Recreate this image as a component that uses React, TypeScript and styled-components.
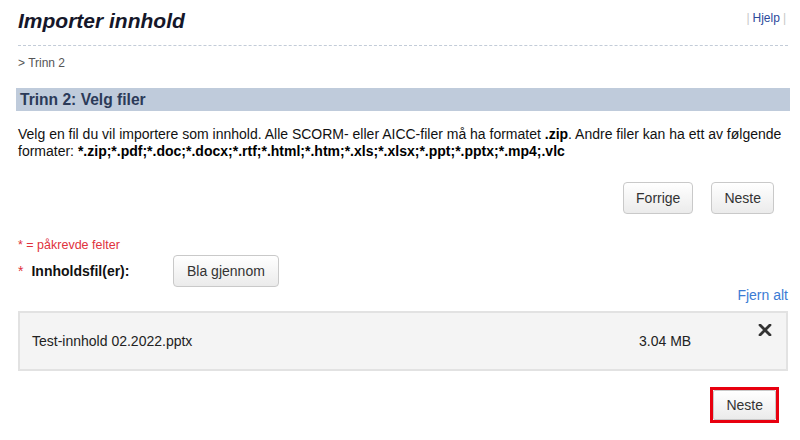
import styled, { createGlobalStyle } from 'styled-components';

const GlobalStyle = createGlobalStyle`
  html, body {
    margin: 0;
    padding: 0;
    background: #ffffff;
  }
  body {
    font-family: 'Liberation Sans', Arial, sans-serif;
    color: #1a1a1a;
  }
`;

const Page = styled.div`
  width: 800px;
  height: 440px;
  box-sizing: border-box;
  padding: 0 12px 0 18px;
  overflow: hidden;
`;

const Header = styled.div`
  display: flex;
  justify-content: space-between;
  align-items: flex-start;
  height: 45px;
  border-bottom: 1px dashed #c3ccd8;
`;

const Title = styled.h1`
  margin: 9px 0 0;
  font-size: 21px;
  font-weight: bold;
  font-style: italic;
  color: #15172a;
`;

const HelpLinks = styled.div`
  margin-top: 11px;
  margin-right: 2px;
  font-size: 12px;
  color: #c8c8c8;
  a {
    color: #2c4a9c;
    text-decoration: none;
    margin: 0 3px;
  }
`;

const Breadcrumb = styled.div`
  margin-top: 10px;
  font-size: 12px;
  color: #555;
`;

const SectionBar = styled.div`
  margin: 18px -2px 0;
  height: 23px;
  display: flex;
  align-items: center;
  padding-left: 4px;
  background: #bfcbdb;
  font-size: 15.6px;
  font-weight: bold;
  color: #2b3a58;
`;

const Description = styled.p`
  margin: 15px 0 0;
  font-size: 14px;
  line-height: 17px;
  color: #111;
  b {
    color: #000;
  }
`;

const ButtonRow = styled.div`
  display: flex;
  justify-content: flex-end;
  gap: 18px;
  margin-top: 22px;
  padding-right: 14px;
`;

const Button = styled.button`
  height: 32px;
  padding: 0 12px;
  font-family: 'Liberation Sans', Arial, sans-serif;
  font-size: 14px;
  color: #333;
  background: linear-gradient(#ffffff, #ebebeb);
  border: 1px solid #c9c9c9;
  border-radius: 4px;
  cursor: pointer;
`;

const BrowseButton = styled(Button)`
  padding: 0 13px;
`;

const Highlight = styled.span`
  display: inline-flex;
  border: 3px solid #e8000f;
  ${Button} {
    height: 30px;
    border-radius: 2px;
  }
`;

const RequiredNote = styled.div`
  margin-top: 24px;
  font-size: 12.5px;
  color: #e0313c;
`;

const FieldRow = styled.div`
  display: flex;
  align-items: center;
  margin-top: 3px;
`;

const FieldLabel = styled.label`
  width: 155px;
  font-size: 14px;
  font-weight: bold;
  color: #111;
  span {
    color: #e0313c;
    font-weight: normal;
    margin-right: 8px;
  }
`;

const RemoveAll = styled.div`
  display: flex;
  justify-content: flex-end;
  font-size: 14px;
  color: #3b7bd4;
`;

const FileBox = styled.div`
  position: relative;
  margin-top: 8px;
  height: 56px;
  display: flex;
  align-items: center;
  padding: 0 12px;
  background: #f4f4f4;
  border: 2px solid #e2e2e2;
  font-size: 14px;
  color: #222;
`;

const FileName = styled.div`
  flex: 1;
`;

const FileSize = styled.div`
  width: 135px;
`;

const RemoveIcon = styled.button`
  position: absolute;
  top: 11px;
  right: 14px;
  border: none;
  background: none;
  padding: 0;
  display: flex;
`;

const FooterRow = styled.div`
  display: flex;
  justify-content: flex-end;
  margin-top: 16px;
  padding-right: 9px;
`;

export default function App() {
  return (
    <>
      <GlobalStyle />
      <Page>
        <Header>
          <Title>Importer innhold</Title>
          <HelpLinks>
            |<a href="#">Hjelp</a>|
          </HelpLinks>
        </Header>
        <Breadcrumb>&gt; Trinn 2</Breadcrumb>
        <SectionBar>Trinn 2: Velg filer</SectionBar>
        <Description>
          Velg en fil du vil importere som innhold. Alle SCORM- eller AICC-filer må ha formatet <b>.zip</b>. Andre filer
          kan ha ett av følgende
          <br />
          formater: <b>*.zip;*.pdf;*.doc;*.docx;*.rtf;*.html;*.htm;*.xls;*.xlsx;*.ppt;*.pptx;*.mp4;.vlc</b>
        </Description>
        <ButtonRow>
          <Button>Forrige</Button>
          <Button>Neste</Button>
        </ButtonRow>
        <RequiredNote>* = påkrevde felter</RequiredNote>
        <FieldRow>
          <FieldLabel>
            <span>*</span>Innholdsfil(er):
          </FieldLabel>
          <BrowseButton>Bla gjennom</BrowseButton>
        </FieldRow>
        <RemoveAll>Fjern alt</RemoveAll>
        <FileBox>
          <FileName>Test-innhold 02.2022.pptx</FileName>
          <FileSize>3.04 MB</FileSize>
          <RemoveIcon aria-label="Fjern">
            <svg width="14" height="12" viewBox="0 0 14 12">
              <path d="M2 1 L12 11 M12 1 L2 11" stroke="#333" strokeWidth="2.8" strokeLinecap="round" />
            </svg>
          </RemoveIcon>
        </FileBox>
        <FooterRow>
          <Highlight>
            <Button>Neste</Button>
          </Highlight>
        </FooterRow>
      </Page>
    </>
  );
}
